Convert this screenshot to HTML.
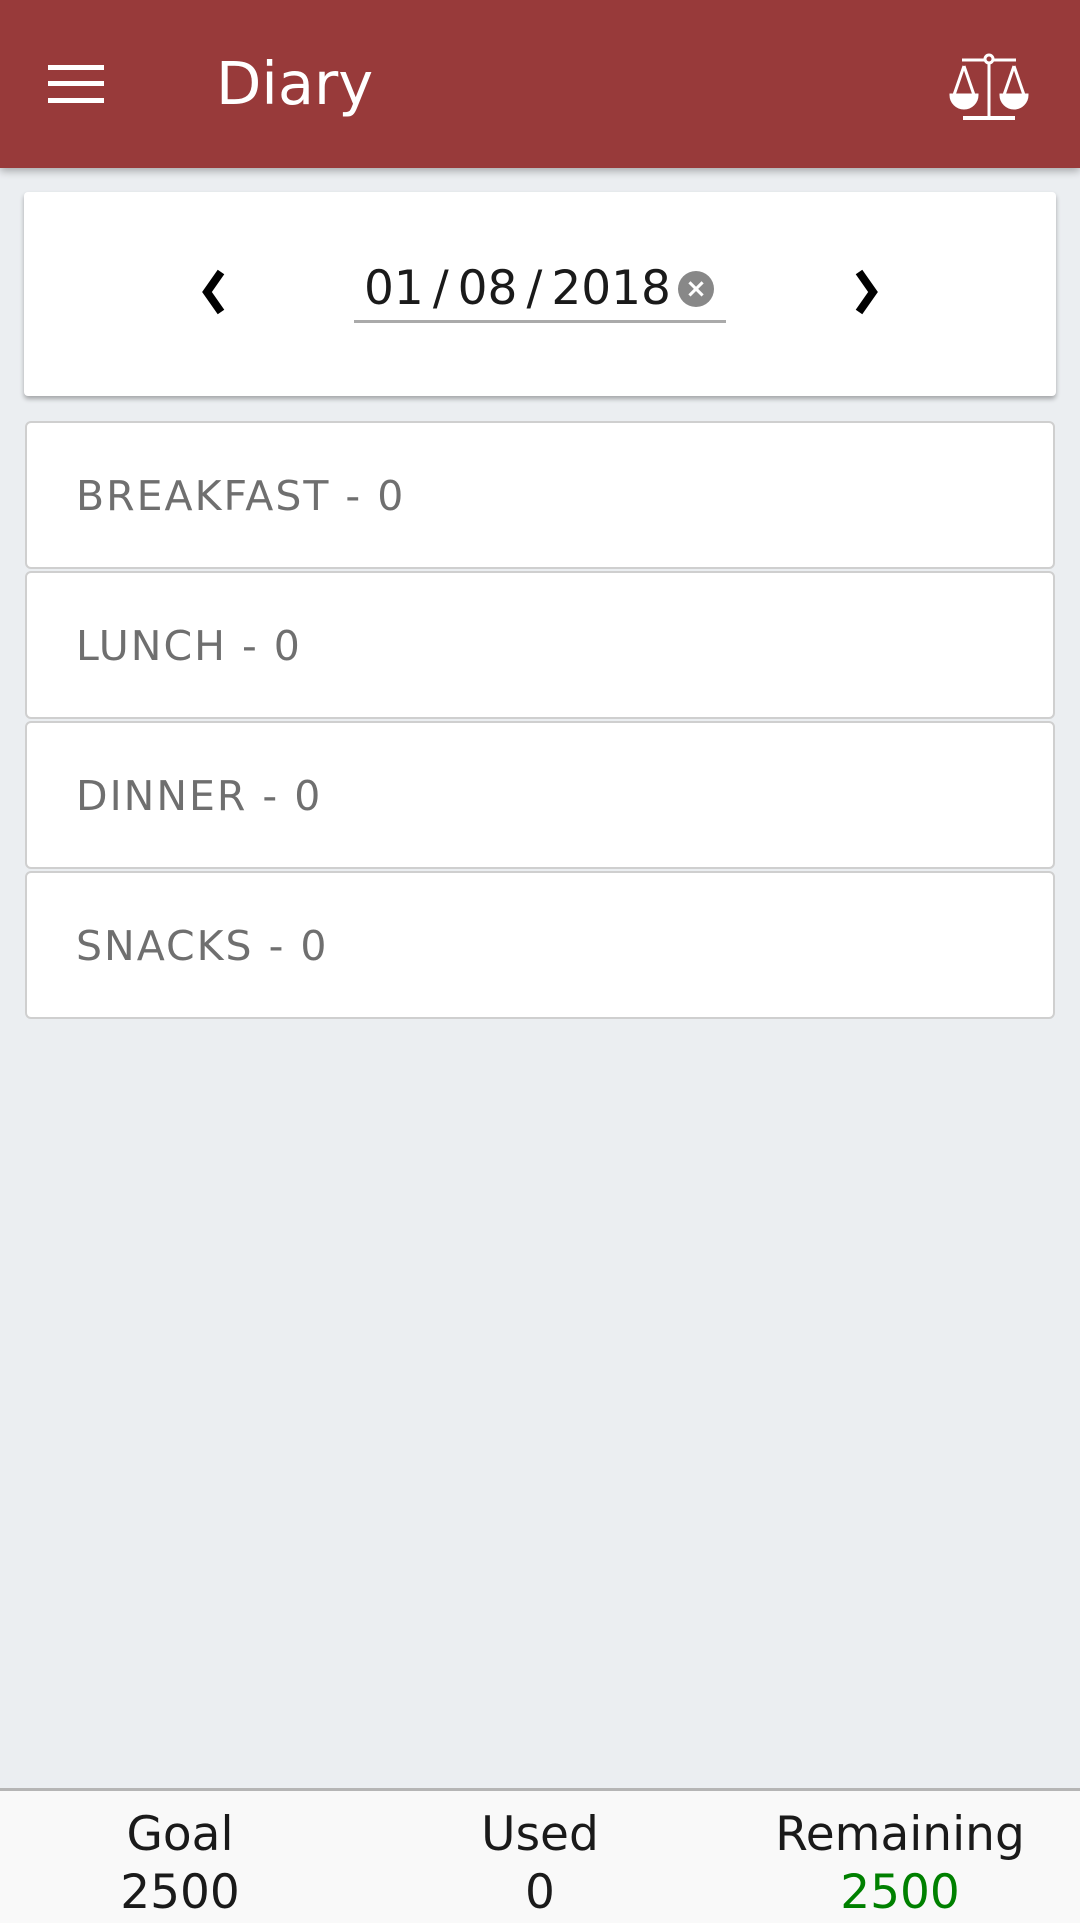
<!DOCTYPE html>
<html><head><meta charset="utf-8"><style>
html,body{margin:0;padding:0}
body{width:1080px;height:1920px;background:#ebeef1;font-family:"DejaVu Sans","Liberation Sans",sans-serif;position:relative;overflow:hidden}
.hdr{position:absolute;left:0;top:0;width:1080px;height:168px;background:#983a3a;box-shadow:0 3px 8px rgba(0,0,0,.3)}
.hdr .t{position:absolute;left:216px;top:50px;color:#fff;font-size:59px;line-height:68px}
.card{position:absolute;left:24px;top:192px;width:1032px;height:204px;background:#fff;border-radius:4px;box-shadow:0 3px 5px rgba(0,0,0,.3)}
.date{position:absolute;left:364px;top:259px;font-size:47px;color:#1a1a1a;line-height:60px;white-space:nowrap}
.date i{font-style:normal;margin:0 9px}
.ul{position:absolute;left:354px;top:320px;width:372px;height:3px;background:#aaa}
.x{position:absolute;left:678px;top:271px;width:36px;height:36px;border-radius:50%;background:#888;color:#fff;font-size:26px;line-height:36px;text-align:center;font-weight:bold}
.meal{position:absolute;left:25px;width:1026px;height:144px;background:#fff;border:2px solid #cfcfcf;border-radius:6px}
.meal span{position:absolute;left:49px;top:49px;font-size:41px;line-height:48px;color:#6f6f6f;letter-spacing:2px}
.ft{position:absolute;left:0;top:1788px;width:1080px;height:132px;background:#f9f9f9;border-top:3px solid #b5b5b5}
.col{position:absolute;top:15px;width:360px;text-align:center;font-size:47px;line-height:58px;color:#1a1a1a}
</style></head><body>
<div class="hdr">
<svg style="position:absolute;left:48px;top:62px" width="56" height="44"><rect x="0" y="3" width="56" height="5" fill="#fff"/><rect x="0" y="19" width="56" height="5" fill="#fff"/><rect x="0" y="36" width="56" height="5" fill="#fff"/></svg>
<div class="t">Diary</div>
<svg style="position:absolute;left:944px;top:50px" width="90" height="72" viewBox="0 0 90 72" fill="none" stroke="#fff" stroke-width="3">
<line x1="18" y1="10" x2="72" y2="10"/><circle cx="45" cy="9" r="4" fill="#983a3a"/><line x1="45" y1="13" x2="45" y2="68"/><line x1="19" y1="68" x2="71" y2="68" stroke-width="4"/>
<path d="M20 16 L10 45 M20 16 L30 45 M70 16 L60 45 M70 16 L80 45"/>
<path d="M7 45 H33 A13 13 0 0 1 7 45Z M57 45 H83 A13 13 0 0 1 57 45Z" fill="#fff"/>
</svg>
</div>
<div class="card"></div>
<svg style="position:absolute;left:196px;top:268px" width="34" height="48"><path d="M25 4 L11 24 L25 44" stroke="#000" stroke-width="8" fill="none"/></svg>
<svg style="position:absolute;left:850px;top:268px" width="34" height="48"><path d="M9 4 L23 24 L9 44" stroke="#000" stroke-width="8" fill="none"/></svg>
<div class="date">01<i>/</i>08<i>/</i>2018</div>
<div class="x">×</div>
<div class="ul"></div>
<div class="meal" style="top:421px"><span>BREAKFAST - 0</span></div>
<div class="meal" style="top:571px"><span>LUNCH - 0</span></div>
<div class="meal" style="top:721px"><span>DINNER - 0</span></div>
<div class="meal" style="top:871px"><span>SNACKS - 0</span></div>
<div class="ft">
<div class="col" style="left:0">Goal<br>2500</div>
<div class="col" style="left:360px">Used<br>0</div>
<div class="col" style="left:720px">Remaining<br><span style="color:#008000">2500</span></div>
</div>
</body></html>
